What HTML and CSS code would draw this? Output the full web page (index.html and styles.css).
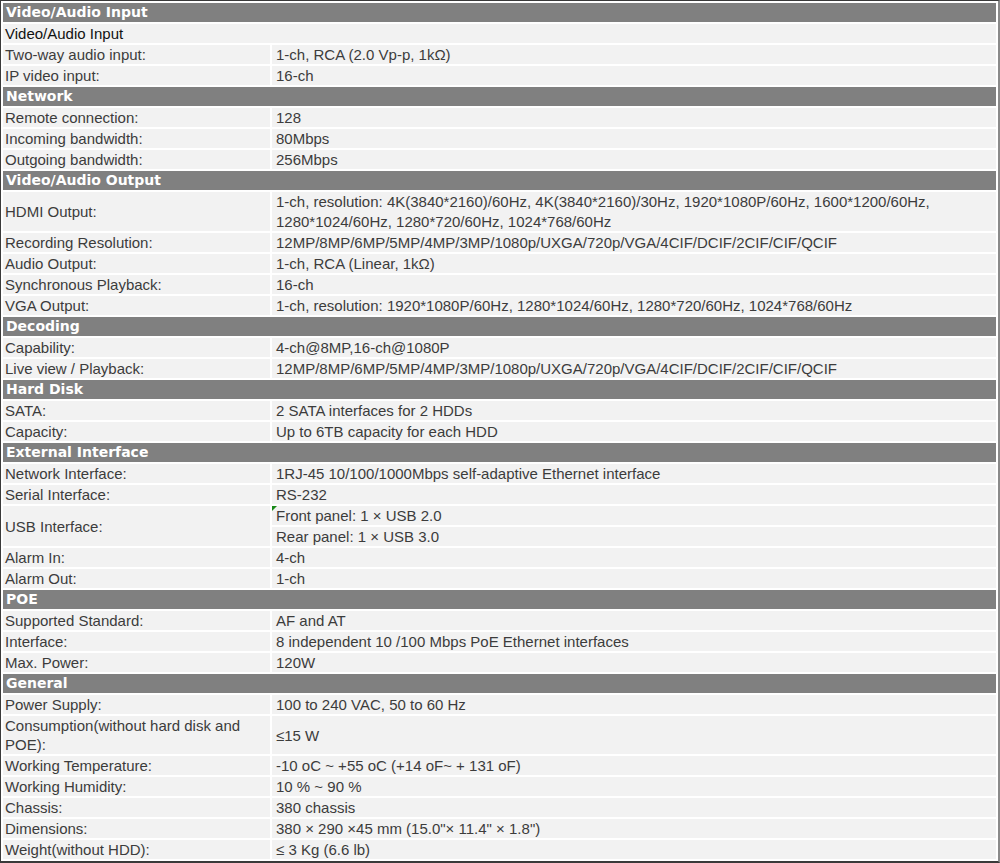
FILE: index.html
```html
<!DOCTYPE html>
<html>
<head>
<meta charset="utf-8">
<link rel="stylesheet" href="styles.css">
</head>
<body>
<div class="frame">
<table class="spec">
<colgroup><col class="c-label"><col class="c-value"></colgroup>
<tbody>
<tr class="sec"><td colspan="2">Video/Audio Input</td></tr>
<tr><td colspan="2" class="sub">Video/Audio Input</td></tr>
<tr><td class="lbl">Two-way audio input:</td><td class="val">1-ch, RCA (2.0 Vp-p, 1kΩ)</td></tr>
<tr><td class="lbl">IP video input:</td><td class="val">16-ch</td></tr>
<tr class="sec"><td colspan="2">Network</td></tr>
<tr><td class="lbl">Remote connection:</td><td class="val">128</td></tr>
<tr><td class="lbl">Incoming bandwidth:</td><td class="val">80Mbps</td></tr>
<tr><td class="lbl">Outgoing bandwidth:</td><td class="val">256Mbps</td></tr>
<tr class="sec"><td colspan="2">Video/Audio Output</td></tr>
<tr class="tall"><td class="lbl">HDMI Output:</td><td class="val">1-ch, resolution: 4K(3840*2160)/60Hz, 4K(3840*2160)/30Hz, 1920*1080P/60Hz, 1600*1200/60Hz, 1280*1024/60Hz, 1280*720/60Hz, 1024*768/60Hz</td></tr>
<tr><td class="lbl">Recording Resolution:</td><td class="val">12MP/8MP/6MP/5MP/4MP/3MP/1080p/UXGA/720p/VGA/4CIF/DCIF/2CIF/CIF/QCIF</td></tr>
<tr><td class="lbl">Audio Output:</td><td class="val">1-ch, RCA (Linear, 1kΩ)</td></tr>
<tr><td class="lbl">Synchronous Playback:</td><td class="val">16-ch</td></tr>
<tr><td class="lbl">VGA Output:</td><td class="val">1-ch, resolution: 1920*1080P/60Hz, 1280*1024/60Hz, 1280*720/60Hz, 1024*768/60Hz</td></tr>
<tr class="sec"><td colspan="2">Decoding</td></tr>
<tr><td class="lbl">Capability:</td><td class="val">4-ch@8MP,16-ch@1080P</td></tr>
<tr><td class="lbl">Live view / Playback:</td><td class="val">12MP/8MP/6MP/5MP/4MP/3MP/1080p/UXGA/720p/VGA/4CIF/DCIF/2CIF/CIF/QCIF</td></tr>
<tr class="sec"><td colspan="2">Hard Disk</td></tr>
<tr><td class="lbl">SATA:</td><td class="val">2 SATA interfaces for 2 HDDs</td></tr>
<tr><td class="lbl">Capacity:</td><td class="val">Up to 6TB capacity for each HDD</td></tr>
<tr class="sec"><td colspan="2">External Interface</td></tr>
<tr><td class="lbl">Network Interface:</td><td class="val">1RJ-45 10/100/1000Mbps self-adaptive Ethernet interface</td></tr>
<tr><td class="lbl">Serial Interface:</td><td class="val">RS-232</td></tr>
<tr><td class="lbl" rowspan="2">USB Interface:</td><td class="val note">Front panel: 1 × USB 2.0</td></tr>
<tr><td class="val">Rear panel: 1 × USB 3.0</td></tr>
<tr><td class="lbl">Alarm In:</td><td class="val">4-ch</td></tr>
<tr><td class="lbl">Alarm Out:</td><td class="val">1-ch</td></tr>
<tr class="sec"><td colspan="2">POE</td></tr>
<tr><td class="lbl">Supported Standard:</td><td class="val">AF and AT</td></tr>
<tr><td class="lbl">Interface:</td><td class="val">8 independent 10 /100 Mbps PoE Ethernet interfaces</td></tr>
<tr><td class="lbl">Max. Power:</td><td class="val">120W</td></tr>
<tr class="sec"><td colspan="2">General</td></tr>
<tr><td class="lbl">Power Supply:</td><td class="val">100 to 240 VAC, 50 to 60 Hz</td></tr>
<tr class="tall2"><td class="lbl">Consumption(without hard disk and POE):</td><td class="val">≤15 W</td></tr>
<tr><td class="lbl">Working Temperature:</td><td class="val">-10 oC ~ +55 oC (+14 oF~ + 131 oF)</td></tr>
<tr><td class="lbl">Working Humidity:</td><td class="val">10 % ~ 90 %</td></tr>
<tr><td class="lbl">Chassis:</td><td class="val">380 chassis</td></tr>
<tr><td class="lbl">Dimensions:</td><td class="val">380 × 290 ×45 mm (15.0"× 11.4" × 1.8")</td></tr>
<tr><td class="lbl">Weight(without HDD):</td><td class="val">≤ 3 Kg (6.6 lb)</td></tr>
</tbody>
</table>
</div>
</body>
</html>
```

FILE: styles.css
```css
html, body {
  margin: 0;
  padding: 0;
  background: #ffffff;
}

.frame {
  box-sizing: border-box;
  width: 1000px;
  height: 863px;
  border-top: 1px solid #3a3a3a;
  border-left: 1px solid #3a3a3a;
  border-bottom: 2px solid #3a3a3a;
  border-right: 2px solid #8a8a8a;
  overflow: hidden;
}

.spec {
  border-collapse: separate;
  border-spacing: 2px;
  width: 997px;
  table-layout: fixed;
  font-family: "Liberation Sans", Arial, sans-serif;
  font-size: 15px;
  color: #3c3c3c;
}

.c-label { width: 267px; }
.c-value { width: 724px; }

.spec td {
  background: #f2f2f2;
  height: 19px;
  padding: 0;
  line-height: 19px;
  vertical-align: middle;
  white-space: normal;
}

.spec .lbl {
  padding-left: 2px;
}

.spec .val {
  padding-left: 4px;
}

.spec .sub {
  padding-left: 2px;
  color: #111111;
}

.spec .tall td {
  line-height: 19.5px;
}

.spec .tall2 td {
  line-height: 19px;
}

.spec .sec td {
  background: #808080;
  color: #ffffff;
  font-family: "DejaVu Sans", Verdana, sans-serif;
  font-weight: bold;
  font-size: 14px;
  padding-left: 3px;
}

.spec .note {
  position: relative;
}

.spec .note::before {
  content: "";
  position: absolute;
  left: 0;
  top: 0;
  border-top: 5px solid #1a8a1a;
  border-right: 5px solid transparent;
}
```
